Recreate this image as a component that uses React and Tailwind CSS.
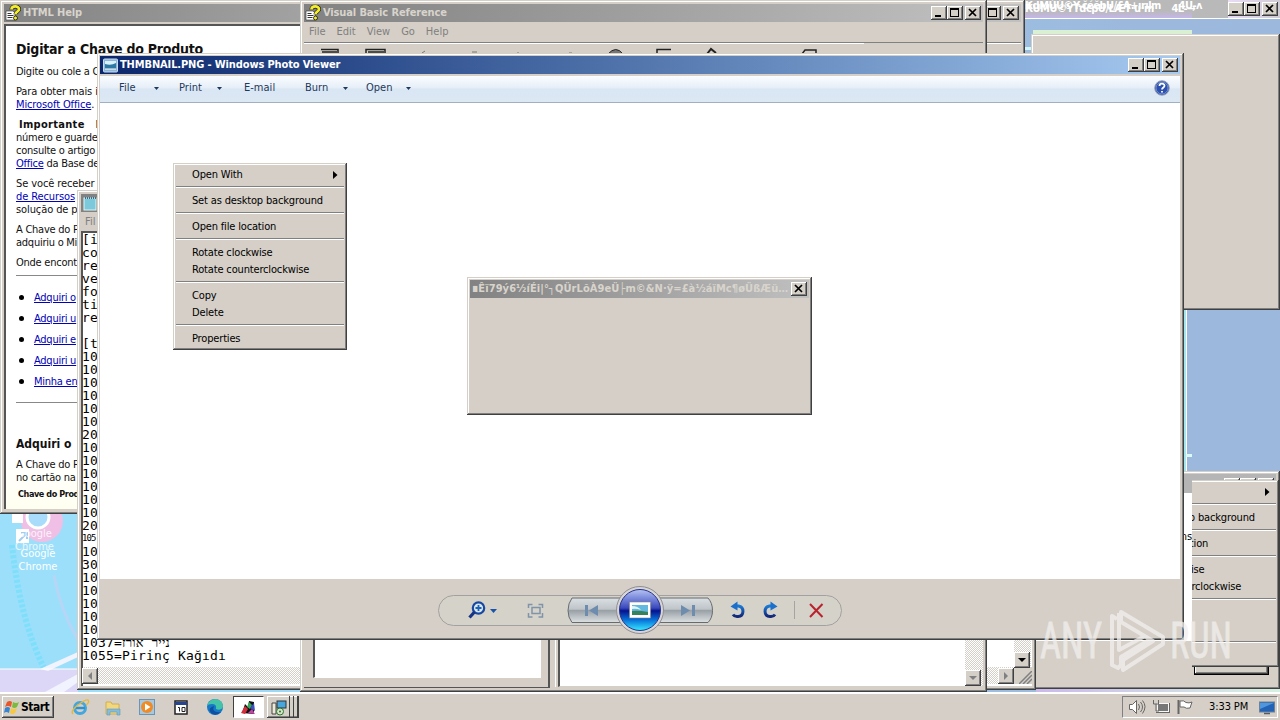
import React from "react";
import clsx from "clsx";

const RAISED = "bg-[#d4d0c8] shadow-[inset_-1px_-1px_#404040,inset_1px_1px_#fff,inset_-2px_-2px_#808080]";
const FRAME = "bg-[#d5cfc7] shadow-[inset_-1px_-1px_#404040,inset_1px_1px_#d4d0c8,inset_-2px_-2px_#808080,inset_2px_2px_#fff]";
const DITHER = "bg-[repeating-conic-gradient(#d4d0c8_0_25%,#fff_0_50%)] bg-[length:2px_2px]";
const TITLE_TEXT = "font-bold text-[11px] tracking-[-0.13px] whitespace-nowrap";

const menuGroups = [
  ["Open With"],
  ["Set as desktop background"],
  ["Open file location"],
  ["Rotate clockwise", "Rotate counterclockwise"],
  ["Copy", "Delete"],
  ["Properties"],
];

const helpLinks = ["Adquiri o", "Adquiri u", "Adquiri e", "Adquiri u", "Minha en"];

const notepadLines = [
  "[i", "co", "re", "ve", "fo", "ti", "re", "", "[t",
  "10", "10", "10", "10", "10", "10", "20", "10", "10", "10", "10", "10", "10",
  "20", "105", "10", "30", "10", "10", "10", "10", "10",
  "1037=נייר אורז", "1055=Pirinç Kağıdı",
];

function WinButton({ kind, className }) {
  return (
    <span className={clsx("block w-4 h-[14px] shrink-0", RAISED, className)}>
      <svg width="16" height="14" viewBox="0 0 16 14" fill="none" stroke="#000">
        {kind === "min" && <path d="M4 10h6" strokeWidth="2" shapeRendering="crispEdges" />}
        {kind === "max" && <path d="M3.5 3v7.5h8V3M3 3h9" strokeWidth="1" shapeRendering="crispEdges" />}
        {kind === "max" && <path d="M3 3h9" strokeWidth="2" shapeRendering="crispEdges" />}
        {kind === "close" && <path d="M4 3l7 7M11 3l-7 7" strokeWidth="1.7" />}
      </svg>
    </span>
  );
}

function Controls({ kinds = ["min", "max", "close"] }) {
  return (
    <div className="ml-auto flex pr-[2px]">
      {kinds.map((k) => (
        <WinButton key={k} kind={k} className={k === "close" ? "ml-[2px]" : ""} />
      ))}
    </div>
  );
}

function HelpIcon() {
  return (
    <svg width="16" height="16" viewBox="0 0 16 16" className="shrink-0">
      <path d="M1 6h7l2 2v7H1z" fill="#fff" stroke="#333" strokeWidth=".6" />
      <path d="M2.5 8.500h4M2.500 10.500h6M2.500 12.500h5" stroke="#333" />
      <path d="M6.500 4.500c0-4 7.500-4 7.500-.3 0 2.500-3.500 2.300-3.500 5" fill="none" stroke="#111" strokeWidth="4" />
      <path d="M6.500 4.500c0-4 7.500-4 7.500-.3 0 2.500-3.500 2.300-3.500 5" fill="none" stroke="#f4ee28" strokeWidth="2.800" />
      <circle cx="10.500" cy="13" r="2" fill="#f4ee28" stroke="#111" strokeWidth=".8" />
    </svg>
  );
}

function PhotoIcon() {
  return (
    <svg width="16" height="15" viewBox="0 0 16 15" className="shrink-0">
      <rect x="1.500" y="1" width="14" height="13" rx="1" fill="#8fb4d9" stroke="#c6dcf2" />
      <rect x="3" y="3" width="11" height="8" fill="#2e78a6" />
      <path d="M3 3h11v2q-5 3-11 1z" fill="#d9f1fa" />
      <path d="M3 11h11" stroke="#fff" />
    </svg>
  );
}

function Menu({ className }) {
  return (
    <div className={clsx("w-[174px] h-[187px] shrink-0 p-[3px] text-[11px] leading-[17px] text-black tracking-[-0.16px]", FRAME, className)}>
      {menuGroups.map((group, i) => (
        <div key={i}>
          {i > 0 && <div className="h-[9px] pt-[3px]"><div className="h-[2px] border-t border-b border-t-[#808080] border-b-white" /></div>}
          {group.map((item) => (
            <div key={item} className="flex h-[17px] items-center pl-4 pr-[6px]">
              <span className="whitespace-nowrap">{item}</span>
              {item === "Open With" && (
                <svg width="5" height="8" className="ml-auto"><path d="M0 0l4.500 4L0 8z" /></svg>
              )}
            </div>
          ))}
        </div>
      ))}
    </div>
  );
}

function A({ children }) {
  return <span className="text-[#0000b8] underline">{children}</span>;
}

function HtmlHelp() {
  return (
    <div className={clsx("absolute left-0 top-0 w-[320px] h-[514px] pl-1 pt-1", FRAME)}>
      <div className="flex h-[18px] items-center gap-[2px] bg-linear-to-r from-[#828282] to-[#a4a4a4] pl-[1px] text-[#d8d4cc]">
        <HelpIcon />
        <span className={TITLE_TEXT}>HTML Help</span>
      </div>
      <div className="mt-[2px] h-[485px] border-l-2 border-t-2 border-[#555] bg-linear-to-b from-white from-90% to-[#fffff0] pl-[10px] text-[11px] leading-[13px] text-[#111] tracking-[-0.25px] whitespace-nowrap">
        <h1 className="pt-[14px] text-[14px] leading-[18px] font-bold tracking-[-0.22px]">Digitar a Chave do Produto</h1>
        <p className="mt-[7px]">Digite ou cole a Chave</p>
        <p className="mt-[7px] tracking-[-0.12px]">Para obter mais informações<br /><A>Microsoft Office</A>.</p>
        <p className="mt-[7px]"><b className="pl-[3px] pr-[8px] tracking-[0.3px]">Importante</b> Mantenha<br />número e guarde<br />consulte o artigo<br /><A>Office</A> da Base de</p>
        <p className="mt-[7px] tracking-[-0.1px]">Se você receber<br /><A>de Recursos</A><br />solução de pr</p>
        <p className="mt-[7px]">A Chave do P<br />adquiriu o Mic</p>
        <p className="mt-[7px]">Onde encontro</p>
        <div className="mt-[6px] border-t border-[#888]" />
        <ul className="mt-[11px]">
          {helpLinks.map((l, i) => (
            <li key={i} className="flex h-[21px] items-center">
              <span className="ml-[3px] mr-[10px] size-[5px] rounded-full bg-black" />
              <A>{l}</A>
            </li>
          ))}
        </ul>
        <div className="mt-[10px] border-t border-[#888]" />
        <h2 className="mt-[33px] text-[12px] leading-[16px] font-bold tracking-[0px]">Adquiri o</h2>
        <p className="mt-[6px]">A Chave do P<br />no cartão na</p>
        <p className="mt-[4px] pl-[2px] text-[9px] font-bold tracking-[-0.4px]">Chave do Produto</p>
      </div>
    </div>
  );
}

function Notepad() {
  return (
    <div className={clsx("absolute left-[77px] top-[190px] w-[959px] h-[500px] p-1", FRAME)}>
      <div className="flex h-[18px] items-center bg-[#828282] pl-[2px]">
        <svg width="15" height="15" viewBox="0 0 15 15">
          <rect x="1" y="2" width="12" height="12" fill="#7cc9dc" stroke="#dff5f8" />
          <path d="M2 2h11" stroke="#406c80" strokeDasharray="1 1" strokeWidth="2" />
        </svg>
      </div>
      <div className="h-[19px] pl-1 text-[11px] leading-[19px] text-[#808080]">Fil</div>
      <div className="flex h-[455px] flex-col border-l-2 border-t-2 border-[#555] bg-white">
        <div className="-ml-px h-[434px] font-['DejaVu_Sans_Mono',monospace] text-[13px] leading-[13px] tracking-[0.17px] text-black">
          {notepadLines.map((line, i) => (
            <div key={i} className={clsx("h-[13px] whitespace-pre", line === "105" && "text-[9px] tracking-[-0.9px]")}>{line}</div>
          ))}
        </div>
        <div className={clsx("flex h-[17px] items-center", DITHER)}>
          <span className={clsx("-ml-px flex size-[16px] items-center justify-center", RAISED)}>
            <svg width="6" height="8"><path d="M5 0v8L1 4z" fill="#808080" /></svg>
          </span>
          <span className={clsx("ml-auto flex size-[16px] items-center justify-center", RAISED)}>
            <svg width="6" height="8"><path d="M1 0v8l4-4z" fill="#808080" /></svg>
          </span>
          <span className="flex h-[17px] w-[18px] items-end justify-end bg-[#d4d0c8]">
            <svg width="13" height="13" stroke="#808080" strokeWidth="1.500"><path d="M0 13L13 0M4 13l9-9M8 13l5-5" /></svg>
          </span>
        </div>
      </div>
      <div className={clsx("absolute bottom-[22px] right-[5px] flex h-[40px] w-[17px] items-end", DITHER)}>
        <span className={clsx("flex size-[16px] items-center justify-center", RAISED)}>
          <svg width="8" height="5"><path d="M0 0h8L4 4z" /></svg>
        </span>
      </div>
    </div>
  );
}

function VbReference() {
  return (
    <div className={clsx("absolute left-[300px] top-0 flex w-[687px] h-[692px] flex-col p-1", FRAME)}>
      <div className="flex h-[18px] shrink-0 items-center gap-[2px] bg-linear-to-r from-[#828282] to-[#c0c0c0] pl-[1px] text-[#d8d4cc]">
        <HelpIcon />
        <span className={TITLE_TEXT}>Visual Basic Reference</span>
        <Controls />
      </div>
      <div className="flex h-[21px] shrink-0 items-center gap-[11px] border-b border-[#808080] pl-[5px] pt-[1px] text-[11px] text-[#808080]">
        <span>File</span><span>Edit</span><span>View</span><span>Go</span><span>Help</span>
      </div>
      <svg width="560" height="11" className="shrink-0 border-t border-white" fill="none" stroke="#222">
        <path d="M17 5.500h17v5M18 8h15M62 10v-4.500h19v5M64 8h16M353 10v-4.500h14M498 10l3-4h11v4" strokeWidth="1.500" />
        <path d="M304 10q8-9 15 0z" fill="#777" />
        <path d="M403 10l4-5 5 4" strokeWidth="2" />
        <path d="M118 9l3-2M168 8h5M213 9h2M265 9h3" stroke="#777" />
      </svg>
      <div className="mt-auto flex h-[49px] w-full">
        <div className="w-[246px] border-b border-r-2 border-[#555] pl-[9px] pr-[7px] pb-[9px]">
          <div className="h-full border-l-2 border-l-[#555] border-b border-b-white bg-white" />
        </div>
        <div className="ml-[5px] h-[48px] flex-1 border-l border-white pl-[2px]">
          <div className="h-full border-l-2 border-b border-l-[#555] border-b-[#d4d0c8] bg-white">
            <div className={clsx("ml-auto flex h-full w-[18px] items-end", DITHER)}>
              <span className={clsx("flex size-[16px] items-center justify-center", RAISED)}>
                <svg width="8" height="5"><path d="M0 0h8L4 4z" fill="#808080" /></svg>
              </span>
            </div>
          </div>
        </div>
      </div>
    </div>
  );
}

function ToolItem({ label, className, arrow = true }) {
  return (
    <div className={clsx("flex shrink-0 items-center justify-between whitespace-nowrap", className)}>
      <span>{label}</span>
      {arrow && <svg width="5" height="3"><path d="M0 0h5L2.500 3z" fill="#1e395b" /></svg>}
    </div>
  );
}

function ViewerControls() {
  return (
    <svg width="406" height="50" viewBox="437 585 406 50" className="block">
      <defs>
        <linearGradient id="metal" x2="0" y2="1">
          <stop offset="0" stopColor="#dbe0e3" />
          <stop offset=".46" stopColor="#bec4c8" />
          <stop offset=".5" stopColor="#989fa5" />
          <stop offset="1" stopColor="#dce1e2" />
        </linearGradient>
        <linearGradient id="orb" x2="0" y2="1">
          <stop offset="0" stopColor="#b5c3f4" />
          <stop offset=".45" stopColor="#3949bd" />
          <stop offset=".52" stopColor="#06128e" />
          <stop offset=".75" stopColor="#0876dc" />
          <stop offset="1" stopColor="#38eaff" />
        </linearGradient>
        <linearGradient id="ink" x2="0" y2="1">
          <stop offset="0" stopColor="#1a7ad5" />
          <stop offset="1" stopColor="#132678" />
        </linearGradient>
      </defs>
      <rect x="438.500" y="595.500" width="403" height="30" rx="15" fill="#d5d2ca" stroke="#a3a19f" />
      <path d="M572 598h50v24.500h-50q-4-5-4-12t4-12.500zM658 598h50q4.500 5 4.500 12.500t-4.500 12h-50z" fill="url(#metal)" stroke="#666b70" />
      <circle cx="640" cy="610" r="23.500" fill="#d8d6d5" stroke="#8d8d94" />
      <circle cx="640" cy="610" r="20.500" fill="url(#orb)" stroke="#27328c" />
      <rect x="629.500" y="602" width="21" height="16" fill="#fff" stroke="#888" strokeWidth=".6" />
      <rect x="632" y="605" width="16" height="10" fill="#63b8df" />
      <path d="M632 611q6-1 16 1v3h-16z" fill="#38825b" />
      <path d="M632 606q6 0 9 4-5-2-9-1z" fill="#e4f6f8" />
      <g fill="#6e8cae">
        <path d="M585 605h3v11h-3zM598 605v11l-9-5.500zM681 605v11l9-5.500zM692 605h3v11h-3z" />
      </g>
      <circle cx="478.500" cy="608" r="5.700" fill="#d9e7f2" stroke="#1747a0" strokeWidth="2.200" />
      <path d="M475.500 608h6M478.500 605v6" stroke="#1d62b9" strokeWidth="1.800" />
      <path d="M474.500 612l-5 5.500" stroke="#173484" strokeWidth="3.200" />
      <path d="M490 609h7l-3.500 4z" fill="#1753a8" />
      <g fill="none" stroke="#7f93a9" strokeWidth="1.500">
        <rect x="532" y="607.500" width="8" height="6" />
        <path d="M528.500 608v-3.500h4M538.500 604.500h4v3.500M542.500 613v4h-4M532.500 617h-4v-4" />
      </g>
      <path d="M735 606h3.500c6 1 6 10-.5 10.500-2 .3-4-.5-5-2" fill="none" stroke="url(#ink)" strokeWidth="3" />
      <path d="M730.500 606.500l7-5v9z" fill="#1a70ca" />
      <path d="M773 606h-3.500c-6 1-6 10 .5 10.500 2 .3 4-.5 5-2" fill="none" stroke="url(#ink)" strokeWidth="3" />
      <path d="M777.500 606.500l-7-5v9z" fill="#1a70ca" />
      <path d="M794.500 601v18" stroke="#a6a4a0" />
      <path d="M810 604l12.500 13M822.500 604L810 617" stroke="#b8232f" strokeWidth="2" />
    </svg>
  );
}

function PhotoViewer() {
  return (
    <div className={clsx("absolute left-[97px] top-[53px] flex w-[1087px] h-[587px] flex-col pl-[3px] pr-1 pt-[3px] pb-[2px]", FRAME)}>
      <div className="flex h-[18px] shrink-0 items-center gap-[2px] bg-linear-to-r from-[#0c266c] to-[#a6caf0] pl-[2px] text-white">
        <PhotoIcon />
        <span className={TITLE_TEXT}>THMBNAIL.PNG - Windows Photo Viewer</span>
        <Controls />
      </div>
      <div className="mt-[2px] flex h-[27px] shrink-0 items-center border-b border-[#a0afc3] bg-[linear-gradient(#fbfdff,#e6eef8_45%,#d9e6f3_50%,#dce8f4)] pb-[1px] pl-[19px] pr-[10px] text-[11px] tracking-[0.02px] text-[#1e395b]">
        <ToolItem label="File" className="w-[40px]" />
        <ToolItem label="Print" className="ml-[20px] w-[43px]" />
        <ToolItem label="E-mail" className="ml-[22px] w-[30px]" arrow={false} />
        <ToolItem label="Burn" className="ml-[31px] w-[43px]" />
        <ToolItem label="Open" className="ml-[18px] w-[45px]" />
        <svg width="16" height="16" viewBox="0 0 16 16" className="-mt-[2px] ml-auto">
          <circle cx="8" cy="8" r="7.300" fill="#2c50ad" stroke="#9da5b5" />
          <circle cx="8" cy="8" r="6" fill="none" stroke="#7690d4" />
          <path d="M5.500 6c0-3 5-3 5-.2C10.500 7.500 8 7.500 8 9.500M8 11v1.500" fill="none" stroke="#fff" strokeWidth="1.800" />
        </svg>
      </div>
      <div className="flex-1 bg-white" />
      <div className="flex h-[59px] shrink-0 justify-center bg-[#d5cfc7] pt-[6px]">
        <ViewerControls />
      </div>
    </div>
  );
}

function GarbledDialog() {
  return (
    <div className={clsx("absolute left-[467px] top-[277px] w-[345px] h-[138px] p-[3px]", FRAME)}>
      <div className="flex h-[18px] items-center bg-linear-to-r from-[#828282] to-[#c0c0c0] pl-[2px] text-[#d8d4cc]">
        <span className="w-[319px] overflow-hidden text-[11px] font-bold tracking-[0.08px] whitespace-nowrap">∎Êï79ý6½íÉi|°┐QÜrLõÀ9eÜ├m©&amp;N·ÿ=£à½áïMc¶øÜßÆü…</span>
        <Controls kinds={["close"]} />
      </div>
    </div>
  );
}

function RightSide() {
  return (
    <>
      <div className="absolute left-[1025px] top-0 flex h-[19px] w-[255px] items-start overflow-hidden border-b border-white bg-[#b9b9b9]">
        <div className="h-full w-[167px] shrink-0 bg-linear-to-b from-[#b9b9b9] from-60% to-[#c6b6e8] text-[11px] leading-[13px] font-bold tracking-[-0.5px] whitespace-nowrap text-white">
          <div className="-mt-px">ҜdMÙÚ©Y-čéĕbU/£Ǡ+ırılm&nbsp; &nbsp; &nbsp; 4U-ʌ</div>
          <div className="-mt-[10px]">ЌUMU©YTdcpU/ŁÆT·u·m&nbsp; &nbsp; &nbsp; 4L-→</div>
        </div>
        <div className="ml-auto flex h-full w-[52px] items-start bg-linear-to-r from-[#e9dcf6] to-[#cfcbd4] pt-[2px]">
          <Controls />
        </div>
      </div>
      <div className="absolute left-[1033px] top-[30px] h-[5px] w-[159px] bg-[#daf0d2]" />
      <div className="absolute left-[1025px] top-[47px] h-[3px] w-[6px] bg-[#cff6fa]" />
      <div className={clsx("absolute left-[1031px] top-[34px] w-[249px] h-[276px]", FRAME)} />
      <div className="absolute left-[1184px] top-[310px] h-[162px] w-[3px] border-r border-white bg-[#a6e6ea]" />
      <div className="absolute left-[1186px] top-[454px] h-[3px] w-[6px] bg-[#dcfaf5]" />
      <div className={clsx("absolute left-[1000px] top-[471px] w-[280px] h-[218px]", FRAME)}>
        <div className="mx-1 mt-[3px] flex h-[19px] items-start bg-[#b5b5b5] pt-[4px]"><Controls /></div>
        <div className="mr-2 h-[148px] w-[192px] bg-white pt-[36px] text-right text-[11px] tracking-[-0.1px]">options</div>
      </div>
      <div className={clsx("absolute left-[1194px] top-[655px] w-[75px] h-[20px] border border-black", RAISED)} />
      <div className="absolute left-[1192px] top-[480px] flex w-[87px] justify-end overflow-hidden">
        <Menu />
      </div>
    </>
  );
}

function Watermark() {
  return (
    <svg width="200" height="68" viewBox="1036 606 200 68" className="absolute left-[1036px] top-[606px] opacity-75">
      <g fill="#f2f0ee" fontFamily="Roboto, sans-serif" fontSize="50" stroke="#f2f0ee" strokeWidth=".8">
        <text x="1040" y="658" textLength="62" lengthAdjust="spacingAndGlyphs">ANY</text>
        <text x="1170" y="658" textLength="62" lengthAdjust="spacingAndGlyphs">RUN</text>
      </g>
      <g fill="none" stroke="#f2f0ee" strokeWidth="4" strokeLinejoin="round">
        <path d="M1121 612l42 25v7l-40 26v-10l30-19-32-19z" />
        <path d="M1117 619l-5-3v49l6 3 3-3v-8l28-17" />
        <path d="M1119 613v37l26-14" />
      </g>
    </svg>
  );
}

function DesktopIcon() {
  return (
    <div className="absolute left-[8px] top-[512px] w-[60px] text-center text-[11px] leading-[13px] text-white">
      <svg width="56" height="32" viewBox="8 512 56 32" className="block">
        <circle cx="42" cy="521" r="21" fill="#efbfe6" />
        <circle cx="38" cy="517" r="11" fill="#a9dcfb" stroke="#fff" strokeWidth="3" />
        <path d="M12 512h11v11H12zM16 529h13v14H16z" fill="#fff" />
        <path d="M19 541l8-8m-6 0h6v6" stroke="#a2cdf0" strokeWidth="2" fill="none" />
      </svg>
      <div className="-mt-[17px] -ml-[4px] pr-[3px] opacity-80">Google<br />Chrome</div>
      <div className="-mt-[6px]">Google<br />Chrome</div>
    </div>
  );
}

function Taskbar() {
  return (
    <div className="absolute left-0 top-[692px] flex h-[28px] w-full items-center border-t-2 border-white bg-[#d5cfc7] pl-[2px] pr-[2px]">
      <div className={clsx("flex h-[22px] w-[52px] items-center gap-[1px] pl-[2px]", RAISED)}>
        <svg width="16" height="16" viewBox="0 0 16 16">
          <path d="M3 3q3-2 5 0L7 8Q4 6 1 8z" fill="#e8562b" />
          <path d="M9 3q3 2 6 0l-2 5q-3 2-5 0z" fill="#7db93d" />
          <path d="M1 9q3-2 5 0l-1 5q-3-2-5 0z" fill="#3784cf" />
          <path d="M7 9q3 2 6 0l-2 5q-3 2-5 0z" fill="#f8c83e" />
        </svg>
        <span className="text-[12px] font-bold tracking-[-0.5px] text-black">Start</span>
      </div>
      <svg width="186" height="24" viewBox="54 695 186 24" className="shrink-0">
        <circle cx="80" cy="708" r="5.500" fill="none" stroke="#43a6df" strokeWidth="3" />
        <path d="M76 708h9" stroke="#2c91cf" strokeWidth="2.500" />
        <path d="M73 714q-3-3 5-9t10-5q2 2-2 5" fill="none" stroke="#e6b93d" strokeWidth="1.400" />
        <path d="M106 702h5l1 2h7v10h-13z" fill="#f1d780" stroke="#d2ae4e" />
        <path d="M107 715v-6h13v6h-3v-3h-7v3z" fill="#83bddb" stroke="#6499bb" strokeWidth=".6" />
        <rect x="139.500" y="699.500" width="15" height="15" fill="#a7c8df" stroke="#6995b6" />
        <circle cx="147" cy="707" r="6" fill="#f08a24" />
        <path d="M145 703.500v7l5.500-3.500z" fill="#fff" />
        <rect x="175" y="701" width="12" height="13" fill="#fff" stroke="#222" strokeWidth="1.500" />
        <path d="M175 703.500h12" stroke="#26438d" strokeWidth="3" />
        <path d="M178 707.500h1.500v4M182 707.500h3v4h-3z" stroke="#222" fill="none" />
        <circle cx="215" cy="707" r="8" fill="#1679c7" />
        <path d="M207 706q2-7 9-7 7 1 7 8-2 4-7 2 1-5-4-5-4 0-5 2z" fill="#45c3a8" />
        <path d="M214 706q-3 7 7 6-5 5-10 1-4-5 3-7z" fill="#0e4fa1" />
      </svg>
      <div className="flex h-[22px] w-[31px] shrink-0 -ml-[7px] items-center justify-center border border-t-[#404040] border-l-[#404040] border-r-white border-b-white bg-white">
        <svg width="17" height="17" viewBox="0 0 17 17">
          <path d="M2 14L5 5l3 3 1-6 5 1v12z" fill="#111" />
          <path d="M1 14l4-7 3 3-3 5z" fill="#d52d3c" />
          <path d="M9 3l3 3-2 4-3-2z" fill="#37a659" />
          <path d="M10 9l4-5 1 8z" fill="#3b51c2" />
          <path d="M8 14l4-4 3 5z" fill="#c445a6" />
        </svg>
      </div>
      <div className={clsx("ml-[3px] flex h-[22px] w-[32px] items-center pl-[4px]", RAISED)}>
        <svg width="17" height="17" viewBox="0 0 17 17">
          <path d="M1 4h4v11H1z" fill="#ece9d8" stroke="#444" />
          <rect x="6" y="2" width="9" height="7" fill="#48a6dd" stroke="#333" />
          <circle cx="9" cy="12.500" r="3.500" fill="#d7e3c9" stroke="#28742d" />
          <circle cx="9" cy="12.500" r="1" fill="#28742d" />
        </svg>
        <span className="ml-auto flex h-full gap-[3px] pr-[1px]"><i className="w-px bg-[#404040]" /><i className="w-px bg-[#404040]" /><i className="w-px bg-[#404040]" /></span>
      </div>
      <div className="ml-auto flex h-[22px] w-[156px] items-center border border-t-[#808080] border-l-[#808080] border-r-white border-b-white pl-[5px] pr-[2px]">
        <svg width="68" height="18" viewBox="0 0 68 18" fill="none" stroke="#666">
          <path d="M1.500 6.500h3l4-4v13l-4-4h-3z" fill="#fff" />
          <path d="M10.500 6q2 3 0 6M12.500 4q4 5 0 10M14.500 2.500q5 6 0 13" />
          <rect x="29.500" y="5.500" width="11" height="8" fill="#777" stroke="#f8f8f8" />
          <path d="M28 14.500h14M41.500 5v10M25.500 2v4h5V2M28 6v7h3" />
          <path d="M50.500 2v14" strokeWidth="2" />
          <path d="M52 3q4-1 6 1.500 3 1 6-.5l-2 6q-4 1-6-1h-4z" fill="#fff" />
        </svg>
        <span className="ml-[13px] text-[11px] tracking-[-0.1px] whitespace-nowrap text-black">3:33 PM</span>
        <svg width="16" height="15" viewBox="0 0 16 15" className="ml-auto">
          <rect x=".5" y="2" width="15" height="10" fill="#2263b6" stroke="#6e8398" />
          <path d="M1 3h14l-14 6z" fill="#5096dc" />
          <path d="M5 13.500h6" stroke="#525c65" strokeWidth="1.500" />
        </svg>
      </div>
    </div>
  );
}

export default function App() {
  return (
    <div className="relative h-[720px] w-[1280px] overflow-hidden bg-linear-to-r from-[#9cdffb] from-10% to-[#9cb8dc] to-90% font-['DejaVu_Sans_Condensed','DejaVu_Sans',sans-serif] [font-stretch:condensed]">
      <svg width="78" height="180" viewBox="0 512 78 180" className="absolute left-0 top-[512px]">
        <path d="M0 669h78v23H0z" fill="#ddd7f7" />
        <path d="M12 545Q20 620 44 668" fill="none" stroke="#6edff9" strokeWidth="6" strokeDasharray="3 2" opacity=".65" />
        <path d="M54 575Q60 610 78 640" fill="none" stroke="#b7d6f6" strokeWidth="3" />
        <path d="M40 669l38-17v5l-30 14zM45 692l33-18v8l-14 10z" fill="#f1f4ff" />
        <path d="M0 669h78" stroke="#fff" />
      </svg>
      <div className="absolute left-[1036px] top-[688px] h-[4px] w-[244px] bg-linear-to-r from-[#cbb9ea] to-[#d5f1e2]" />
      <DesktopIcon />
      <HtmlHelp />
      <RightSide />
      <div className={clsx("absolute left-[700px] top-0 w-[325px] h-[400px] p-1", FRAME)}>
        <div className="flex h-[18px] items-center bg-[#c0c0c0]"><Controls /></div>
        <div className="mt-[20px] h-[2px] border-t border-b border-t-[#808080] border-b-white" />
      </div>
      <Notepad />
      <VbReference />
      <PhotoViewer />
      <Menu className="absolute left-[173px] top-[163px]" />
      <GarbledDialog />
      <Taskbar />
      <Watermark />
    </div>
  );
}
